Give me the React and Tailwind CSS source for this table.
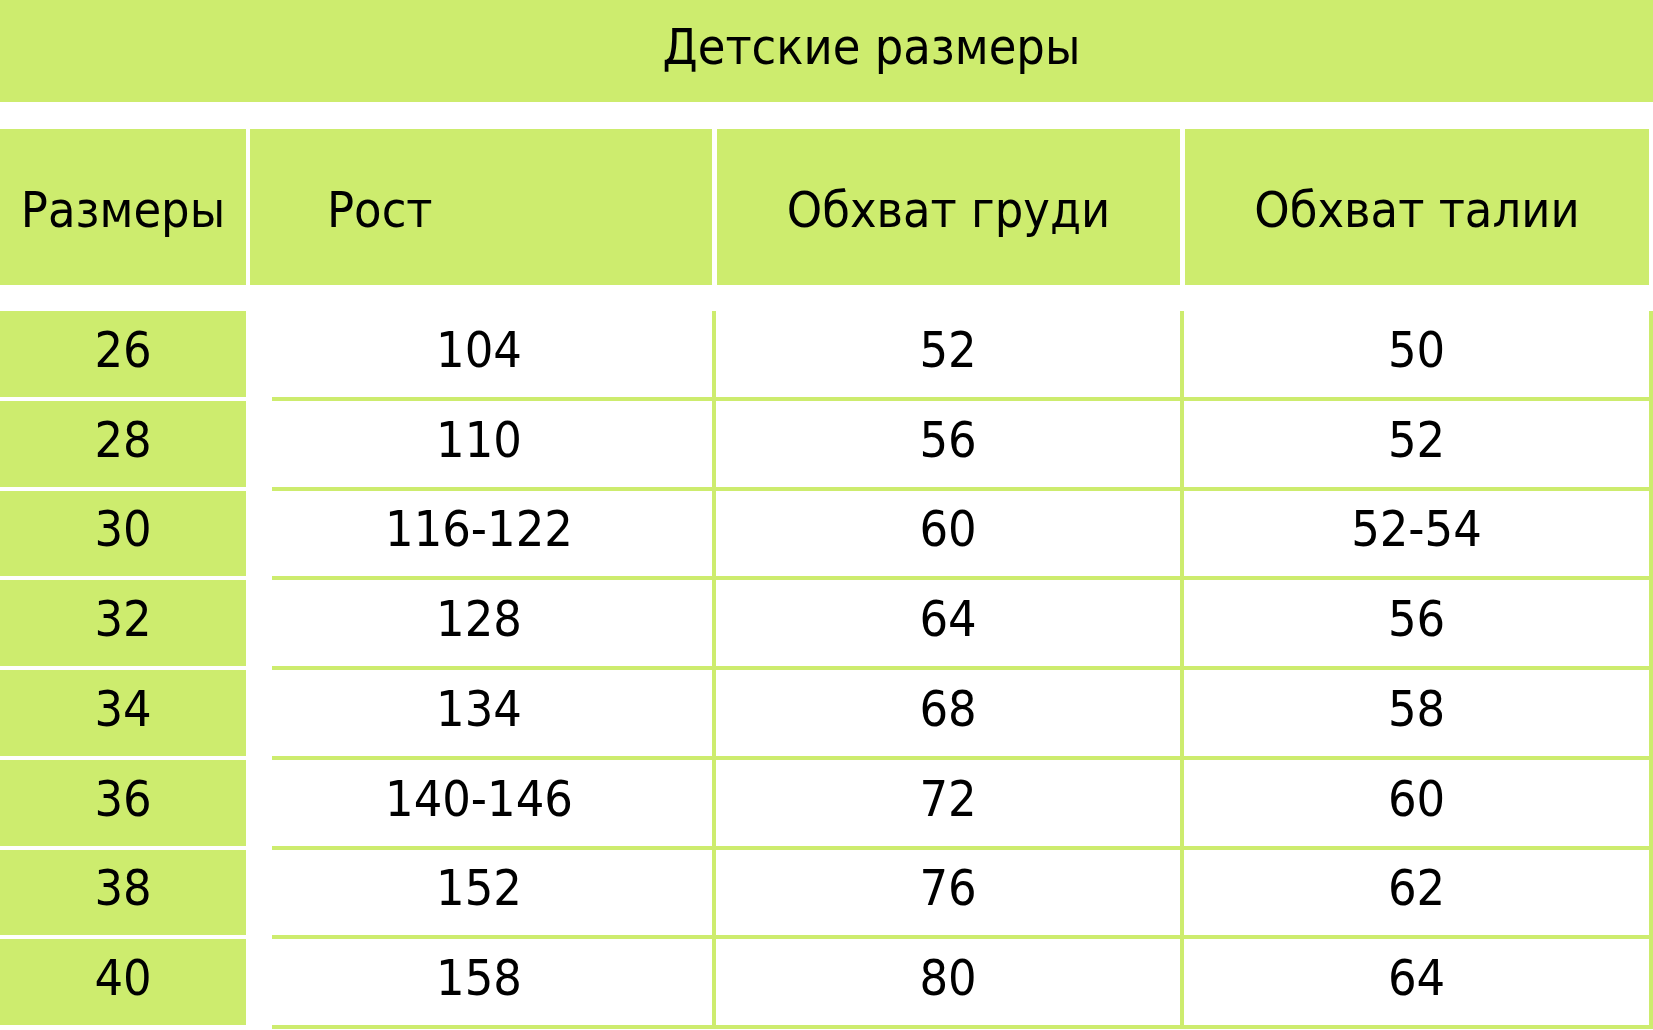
import React from "react";

const rows = [
  ["26", "104", "52", "50"],
  ["28", "110", "56", "52"],
  ["30", "116-122", "60", "52-54"],
  ["32", "128", "64", "56"],
  ["34", "134", "68", "58"],
  ["36", "140-146", "72", "60"],
  ["38", "152", "76", "62"],
  ["40", "158", "80", "64"],
];

export default function App() {
  return (
    <div
      className="w-[1653px] h-[1030px] bg-white overflow-hidden text-black"
      style={{ fontFamily: '"DejaVu Sans Condensed", "DejaVu Sans", sans-serif' }}
    >
      <div className="h-[102px] bg-[#cdec6e] flex items-center justify-center pl-[90px] pb-[8px] text-[50px] leading-none">
        Детские размеры
      </div>
      <div className="mt-[27px] h-[156px] flex text-[50px] leading-none">
        <div className="w-[246px] bg-[#cdec6e] flex items-center justify-center pt-[6px]">Размеры</div>
        <div className="ml-[4px] w-[462px] bg-[#cdec6e] flex items-center pl-[77px] pt-[6px]">Рост</div>
        <div className="ml-[5px] w-[463px] bg-[#cdec6e] flex items-center justify-center pt-[6px]">Обхват груди</div>
        <div className="ml-[5px] w-[464px] bg-[#cdec6e] flex items-center justify-center pt-[6px]">Обхват талии</div>
      </div>
      <div className="mt-[26px] flex flex-col text-[50px] leading-none">
        {rows.map((r, i) => (
          <div key={i} className="flex h-[89.75px]">
            <div className="w-[246px] bg-[#cdec6e] border-b-4 border-white flex items-center justify-center pb-[8px]">
              {r[0]}
            </div>
            <div className="ml-[26px] w-[440px] border-b-4 border-[#cdec6e] flex items-center justify-center pr-[26px] pb-[8px]">
              {r[1]}
            </div>
            <div className="w-[468px] border-l-4 border-b-4 border-[#cdec6e] flex items-center justify-center pb-[8px]">
              {r[2]}
            </div>
            <div className="w-[473px] border-l-4 border-r-4 border-b-4 border-[#cdec6e] flex items-center justify-center pb-[8px]">
              {r[3]}
            </div>
          </div>
        ))}
      </div>
    </div>
  );
}
